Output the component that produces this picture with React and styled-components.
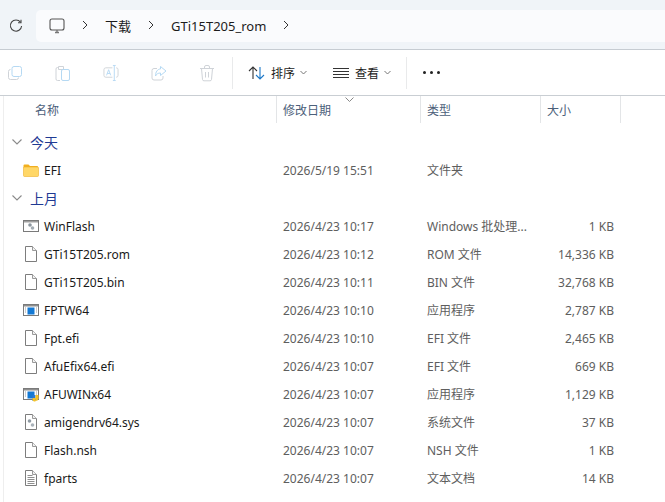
import React from "react";
import styled, { createGlobalStyle } from "styled-components";

const GlobalStyle = createGlobalStyle`
  html, body {
    margin: 0;
    background: #fff;
    font-family: "Noto Sans", "Noto Sans CJK SC", sans-serif;
    font-size: 12px;
    color: #1a1a1a;
  }
`;

const Page = styled.div`
  width: 665px;
  height: 502px;
  overflow: hidden;
  display: flex;
  flex-direction: column;
  background: #fff;
`;

const AddressStrip = styled.div`
  height: 50px;
  flex: none;
  box-sizing: border-box;
  display: flex;
  align-items: center;
  padding: 2px 0 0 9px;
  gap: 13px;
  background: #f0f4f8;
  border-bottom: 1px solid #c6ccd2;
`;

const Breadcrumb = styled.div`
  flex: 1;
  height: 32px;
  display: flex;
  align-items: center;
  padding-left: 13px;
  background: #fafbfd;
  border-radius: 5px 0 0 5px;
`;

const Crumb = styled.span`
  font-size: 13px;
  color: #1c1c1c;
  margin: 0 ${(p) => p.$gap ?? 15}px;
`;

const Toolbar = styled.div`
  height: 46px;
  flex: none;
  box-sizing: border-box;
  display: flex;
  align-items: center;
  padding-left: 7px;
  border-bottom: 1px solid #c9ced3;
  background: #fff;
`;

const ToolIcon = styled.span`
  width: 16px;
  height: 18px;
  display: flex;
  margin-right: 32px;
`;

const ToolSep = styled.div`
  width: 1px;
  height: 32px;
  background: #e9eaeb;
  margin: 0 ${(p) => p.$right ?? 15}px 0 ${(p) => p.$left ?? 0}px;
`;

const ToolLabel = styled.span`
  font-size: 12px;
  color: #1c1c1c;
  margin-left: 6px;
`;

const Caret = styled.svg`
  width: 7px;
  height: 5px;
  margin-left: 5px;
`;

const Body = styled.div`
  flex: 1;
  min-height: 0;
  border-left: 1px solid #eeeeee;
  margin-left: 3px;
  overflow: hidden;
`;

const Columns = styled.div`
  display: grid;
  grid-template-columns: 273px 144px 120px 80px;
`;

const HeaderRow = styled(Columns)`
  height: 27px;
  position: relative;
`;

const HeaderCell = styled.div`
  display: flex;
  align-items: center;
  padding-left: ${(p) => p.$pad ?? 6}px;
  font-size: 12px;
  color: #4c607a;
  border-right: 1px solid #e3e5e7;
`;

const SortMark = styled.svg`
  position: absolute;
  left: 341px;
  top: 1px;
  width: 9px;
  height: 5px;
`;

const GroupRow = styled.div`
  height: 28px;
  display: flex;
  align-items: center;
  padding-left: 8px;
  gap: 8px;
  font-size: 14px;
  color: #1f3a93;
`;

const FileRow = styled(Columns)`
  height: 28px;
  align-items: center;
  color: #5e5e5e;
`;

const NameCell = styled.div`
  display: flex;
  align-items: center;
  gap: 5px;
  padding-left: 19px;
  color: #1a1a1a;
`;

const IconBox = styled.span`
  width: 16px;
  height: 16px;
  display: flex;
  flex: none;
`;

const Cell = styled.div`
  padding-left: ${(p) => p.$pad ?? 6}px;
  white-space: nowrap;
`;

const SizeCell = styled.div`
  text-align: right;
  padding-right: 7px;
  white-space: nowrap;
`;

const Chevron = ({ size = 12 }) => (
  <svg width={size} height={size} viewBox="0 0 12 12" fill="none" stroke="#333" strokeWidth="1">
    <path d="M4 2l4 4-4 4" />
  </svg>
);

const Refresh = () => (
  <svg width="14" height="14" viewBox="0 0 14 14" fill="none" stroke="#444" strokeWidth="1.1">
    <path d="M11.5 3.2A5.6 5.6 0 1 0 12.6 7" />
    <path d="M12 .8v3h-3" />
  </svg>
);

const Monitor = () => (
  <svg width="16" height="16" viewBox="0 0 16 16" fill="none" stroke="#555" strokeWidth="1.1">
    <rect x="1" y="1" width="14" height="11" rx="2" />
    <path d="M6 14.5h4M8 12v2" stroke="#777" strokeWidth="1.4" />
  </svg>
);

const CopyIcon = () => (
  <svg viewBox="0 0 16 18" width="16" height="18" fill="none" stroke="#cfd3d8">
    <rect x="5" y="2.5" width="9.5" height="10" rx="2" stroke="#b5d9f3" />
    <path d="M3.5 5.5A2 2 0 0 0 1.500 7.500v6a2 2 0 0 0 2 2h6a2 2 0 0 0 2-2" />
  </svg>
);

const PasteIcon = () => (
  <svg viewBox="0 0 16 18" width="16" height="18" fill="none" stroke="#cfd3d8">
    <path d="M3 3.500h-.5a1.500 1.500 0 0 0-1.500 1.500v10a1.500 1.500 0 0 0 1.500 1.500H5" />
    <path d="M3.500 2.500h5v3h-5z" />
    <rect x="6.500" y="5.500" width="8" height="11" rx="1.500" stroke="#b5d9f3" />
  </svg>
);

const RenameIcon = () => (
  <svg viewBox="0 0 17 18" width="17" height="18" fill="none" stroke="#cfd3d8">
    <path d="M10 3.500H3a2 2 0 0 0-2 2v6a2 2 0 0 0 2 2h7M14 3.500a2 2 0 0 1 2 2v6a2 2 0 0 1-2 2" />
    <path d="M3.800 11.500l2.200-6 2.200 6M4.500 9.500h3" stroke="#b5d9f3" />
    <path d="M12 1v16M10.500 1h3M10.500 17h3" stroke="#b5d9f3" />
  </svg>
);

const ShareIcon = () => (
  <svg viewBox="0 0 16 18" width="16" height="18" fill="none" stroke="#cfd3d8">
    <path d="M6 4.500H3A2 2 0 0 0 1 6.500v7.500a2 2 0 0 0 2 2h7a2 2 0 0 0 2-2v-2" />
    <path d="M9.500 2.500l5.500 4.500-5.500 4.500V9C7 9 5.500 10 4.500 12c0-4 2-7 5-7z" stroke="#b5d9f3" />
  </svg>
);

const TrashIcon = () => (
  <svg viewBox="0 0 16 18" width="16" height="18" fill="none" stroke="#cfd3d8">
    <path d="M1 4.500h14M5.500 4.500V3a1.500 1.500 0 0 1 1.500-1.500h2A1.500 1.500 0 0 1 10.500 3v1.500" />
    <path d="M2.500 4.500l1 11a1.500 1.500 0 0 0 1.500 1.300h6a1.500 1.500 0 0 0 1.500-1.300l1-11" />
    <path d="M6.500 8v5.500M9.500 8v5.500" />
  </svg>
);

const SortIcon = () => (
  <svg width="17" height="14" viewBox="0 0 17 14" fill="none" strokeWidth="1.1">
    <path d="M5 13V1M1 5l4-4 4 4" stroke="#333" />
    <path d="M12 1v12M8 9l4 4 4-4" stroke="#1d78c8" />
  </svg>
);

const ListIcon = () => (
  <svg width="16" height="10" viewBox="0 0 16 10" fill="none" stroke="#333">
    <path d="M0 .5h16M0 3.500h16M0 6.500h16M0 9.500h16" />
  </svg>
);

const DownCaret = () => (
  <Caret viewBox="0 0 7 5" fill="none" stroke="#777">
    <path d="M.5 1l3 3 3-3" />
  </Caret>
);

const GroupChevron = () => (
  <svg width="10" height="6" viewBox="0 0 10 6" fill="none" stroke="#8a8a8a" strokeWidth="1.1">
    <path d="M.5.5L5 5 9.500.5" />
  </svg>
);

const FolderIcon = () => (
  <svg width="16" height="16" viewBox="0 0 16 16">
    <path d="M0.500 3.500a1 1 0 0 1 1-1h4l1.500 1.500h7a1 1 0 0 1 1 1v1H.5z" fill="#f2b01e" />
    <rect x="0.500" y="5" width="15" height="9.500" rx="1" fill="#ffd767" stroke="#eeb02a" strokeWidth=".6" />
  </svg>
);

const PlainDoc = ({ children }) => (
  <svg width="16" height="16" viewBox="0 0 16 16">
    <path d="M2.500.5h7l4 4v11h-11z" fill="#fff" stroke="#7d7d7d" />
    <path d="M9.500.5v4h4" fill="#f2f2f2" stroke="#9a9a9a" />
    {children}
  </svg>
);

const DocIcon = () => <PlainDoc />;

const TextDocIcon = () => (
  <PlainDoc>
    <path d="M4.500 5.500h5M4.500 7.500h7M4.500 9.500h7M4.500 11.500h7M4.500 13.500h7" stroke="#8f8f8f" />
  </PlainDoc>
);

const SysIcon = () => (
  <PlainDoc>
    <circle cx="6.500" cy="7" r="1.800" fill="#8f9aa3" />
    <circle cx="9.500" cy="11" r="1.800" fill="#a9b2b9" />
  </PlainDoc>
);

const BatIcon = () => (
  <svg width="16" height="16" viewBox="0 0 16 16">
    <rect x=".5" y="2.500" width="15" height="11" fill="#fff" stroke="#7a7a7a" />
    <rect x="1" y="3" width="14" height="1.500" fill="#a0a0a0" />
    <circle cx="7" cy="7" r="1.800" fill="#8b959d" />
    <circle cx="9.500" cy="10" r="1.800" fill="#a3acb3" />
  </svg>
);

const AppIcon = ({ shield }) => (
  <svg width="16" height="16" viewBox="0 0 16 16">
    <rect x=".5" y="2.500" width="15" height="11" fill="#fff" stroke="#7a7a7a" />
    <rect x="1" y="3" width="14" height="1.500" fill="#8e8e8e" />
    <rect x="4.500" y="5.500" width="7" height="7" fill="#1479d4" />
    <path d="M2 6h1M2 8h1M2 10h1M13 6h1M13 8h1M13 10h1" stroke="#9a9a9a" />
    {shield && (
      <>
        <path d="M9.500 9h3v6h-3z" fill="#2b79d6" />
        <path d="M12.500 9h3v3.500a3 3 0 0 1-3 2.500z" fill="#f7c325" />
        <path d="M9.500 12h3v3.500h-1.500a2 2 0 0 1-1.500-2z" fill="#f7c325" />
      </>
    )}
  </svg>
);

const AppShieldIcon = () => <AppIcon shield />;

const today = [
  { name: "EFI", date: "2026/5/19 15:51", type: "文件夹", size: "", Icon: FolderIcon },
];

const lastMonth = [
  { name: "WinFlash", date: "2026/4/23 10:17", type: "Windows 批处理...", size: "1 KB", Icon: BatIcon },
  { name: "GTi15T205.rom", date: "2026/4/23 10:12", type: "ROM 文件", size: "14,336 KB", Icon: DocIcon },
  { name: "GTi15T205.bin", date: "2026/4/23 10:11", type: "BIN 文件", size: "32,768 KB", Icon: DocIcon },
  { name: "FPTW64", date: "2026/4/23 10:10", type: "应用程序", size: "2,787 KB", Icon: AppIcon },
  { name: "Fpt.efi", date: "2026/4/23 10:10", type: "EFI 文件", size: "2,465 KB", Icon: DocIcon },
  { name: "AfuEfix64.efi", date: "2026/4/23 10:07", type: "EFI 文件", size: "669 KB", Icon: DocIcon },
  { name: "AFUWINx64", date: "2026/4/23 10:07", type: "应用程序", size: "1,129 KB", Icon: AppShieldIcon },
  { name: "amigendrv64.sys", date: "2026/4/23 10:07", type: "系统文件", size: "37 KB", Icon: SysIcon },
  { name: "Flash.nsh", date: "2026/4/23 10:07", type: "NSH 文件", size: "1 KB", Icon: DocIcon },
  { name: "fparts", date: "2026/4/23 10:07", type: "文本文档", size: "14 KB", Icon: TextDocIcon },
];

const Row = ({ file }) => (
  <FileRow>
    <NameCell>
      <IconBox>
        <file.Icon />
      </IconBox>
      {file.name}
    </NameCell>
    <Cell>{file.date}</Cell>
    <Cell>{file.type}</Cell>
    <SizeCell>{file.size}</SizeCell>
  </FileRow>
);

export default function App() {
  return (
    <Page>
      <GlobalStyle />
      <AddressStrip>
        <Refresh />
        <Breadcrumb>
          <Monitor />
          <Crumb $gap={14}><Chevron /></Crumb>
          <span>
            <Crumb $gap={0}>下载</Crumb>
          </span>
          <Crumb $gap={14}><Chevron /></Crumb>
          <Crumb $gap={0}>GTi15T205_rom</Crumb>
          <Crumb $gap={14}><Chevron /></Crumb>
        </Breadcrumb>
      </AddressStrip>
      <Toolbar>
        <ToolIcon><CopyIcon /></ToolIcon>
        <ToolIcon><PasteIcon /></ToolIcon>
        <ToolIcon><RenameIcon /></ToolIcon>
        <ToolIcon><ShareIcon /></ToolIcon>
        <ToolIcon><TrashIcon /></ToolIcon>
        <ToolSep $left={-15} />
        <SortIcon />
        <ToolLabel>排序</ToolLabel>
        <DownCaret />
        <span style={{ width: 26 }} />
        <ListIcon />
        <ToolLabel>查看</ToolLabel>
        <DownCaret />
        <span style={{ width: 15 }} />
        <ToolSep $right={16} />
        <svg width="17" height="3" viewBox="0 0 17 3" fill="#222">
          <circle cx="1.500" cy="1.500" r="1.500" />
          <circle cx="8.500" cy="1.500" r="1.500" />
          <circle cx="15.500" cy="1.500" r="1.500" />
        </svg>
      </Toolbar>
      <Body>
        <HeaderRow>
          <HeaderCell $pad={31}>名称</HeaderCell>
          <HeaderCell>修改日期</HeaderCell>
          <HeaderCell>类型</HeaderCell>
          <HeaderCell>大小</HeaderCell>
          <SortMark viewBox="0 0 9 5" fill="none" stroke="#888">
            <path d="M.5.5L4.500 4.500 8.500.5" />
          </SortMark>
        </HeaderRow>
        <GroupRow style={{ marginTop: 5 }}>
          <GroupChevron />
          今天
        </GroupRow>
        {today.map((file) => (
          <Row key={file.name} file={file} />
        ))}
        <GroupRow>
          <GroupChevron />
          上月
        </GroupRow>
        {lastMonth.map((file) => (
          <Row key={file.name} file={file} />
        ))}
      </Body>
    </Page>
  );
}
